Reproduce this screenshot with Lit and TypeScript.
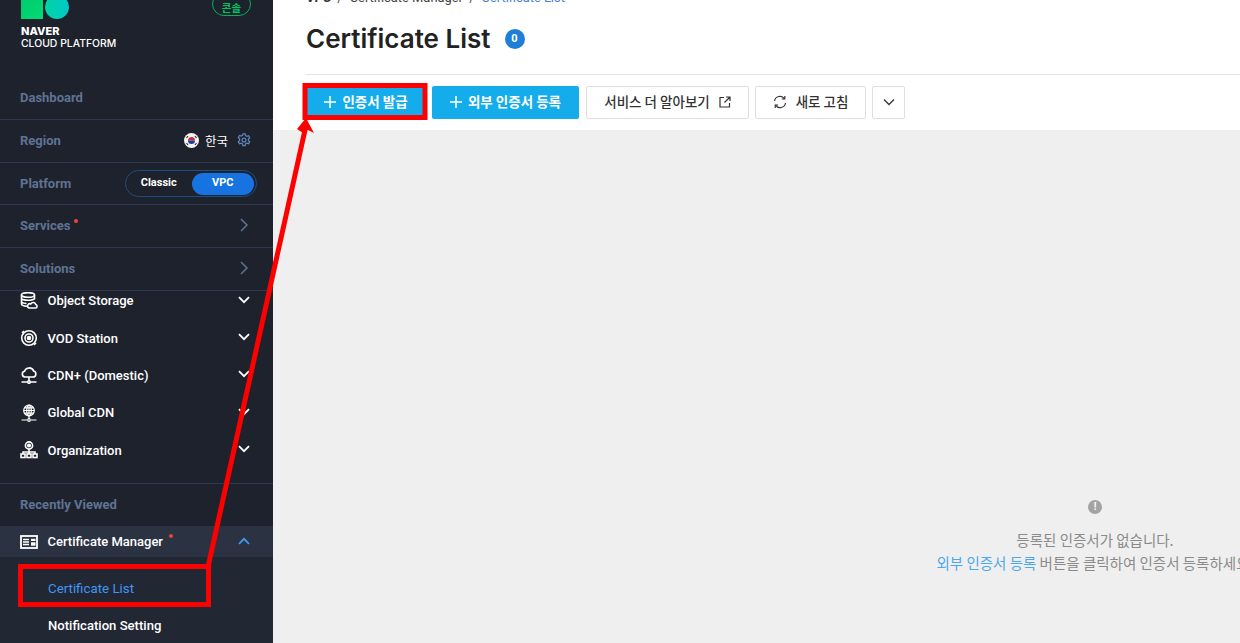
import { LitElement, html, css, svg } from "lit";
import { customElement } from "lit/decorators.js";

const chevDown = html`<svg class="chev" viewBox="0 0 12 8" width="12" height="8"><path d="M1 1.200 6 6.200 11 1.200" fill="none" stroke="#fff" stroke-width="1.800"/></svg>`;
const chevRight = html`<svg viewBox="0 0 8 14" width="8" height="14"><path d="M1 1 7 7 1 13" fill="none" stroke="#5f7394" stroke-width="1.500"/></svg>`;
const plus = html`<svg viewBox="0 0 12 12" width="12" height="12"><path d="M6 0v12M0 6h12" stroke="#fff" stroke-width="1.500"/></svg>`;
const ic = (c: unknown) => html`<svg class="ic" viewBox="0 0 18 18" width="18" height="18" fill="none" stroke="#fff" stroke-width="1.600">${c}</svg>`;

const icons = {
  storage: ic(svg`<ellipse cx="8" cy="3" rx="6.500" ry="2.300"/><path d="M1.500 3v9c0 1 2 2 5.500 2.200M14.500 3v4.500M1.500 6.500c1 1.500 4 1.800 6.500 1.800s5.500-.5 6.500-1.800M1.500 10c1 1 3 1.500 5 1.500"/><path d="M9 16h6.500a1.800 1.800 0 0 0 .3-3.500 2.700 2.700 0 0 0-5-.6A2 2 0 0 0 9 16z"/>`),
  vod: ic(svg`<circle cx="9" cy="9" r="7.300"/><circle cx="9" cy="9" r="4"/><circle cx="9" cy="9" r="1.500" fill="#fff"/><path d="M4 2 2 4M14 16l2-2"/>`),
  cdn: ic(svg`<path d="M5 11h8a3 3 0 0 0 .6-5.900A4.800 4.800 0 0 0 4.500 5.300 2.900 2.900 0 0 0 5 11z"/><path d="M9 11v4M1.500 16h5.500M11 16h5.500"/><circle cx="9" cy="16" r="1.300"/>`),
  global: ic(svg`<g stroke-width="1.200"><circle cx="9" cy="6.500" r="5.300"/><ellipse cx="9" cy="6.500" rx="2.300" ry="5.300"/><path d="M3.700 6.500h10.600M4.500 3.800h9M4.500 9.200h9M9 1.200v13.300M1.500 16h5.500M11 16h5.500"/><circle cx="9" cy="16" r="1.300"/></g>`),
  org: ic(svg`<circle cx="9" cy="4.500" r="3.600"/><circle cx="9" cy="4.500" r="1.300" fill="#fff"/><path d="M9 8v3M3 13v-2h12v2M9 11v2"/><rect x="1" y="13" width="4" height="3.500"/><rect x="7" y="13" width="4" height="3.500"/><rect x="13" y="13" width="4" height="3.500"/>`),
  cert: ic(svg`<rect x="1" y="3" width="16" height="12" stroke-width="1.800"/><path d="M3 6.500h6M3 9h6M3 11.500h6" stroke-width="1.400"/><rect x="11" y="5.800" width="4.500" height="2.200" fill="#fff" stroke="none"/><rect x="11" y="9.300" width="4.500" height="3.400" fill="#fff" stroke="none"/>`),
};

@customElement("app-root")
export class AppRoot extends LitElement {
  static styles = css`
    :host { display: block; width: 1240px; height: 643px; overflow: hidden; position: relative; font-family: Roboto, "Noto Sans CJK KR", sans-serif; background: #fff; }
    .page { display: flex; height: 643px; }
    .side { width: 273px; flex: none; background: #1e222d; display: flex; flex-direction: column; overflow: hidden; }
    .logo { height: 76px; flex: none; padding-left: 21px; position: relative; box-sizing: border-box; }
    .marks { display: flex; gap: 2px; margin-top: -5px; height: 24px; }
    .sq { width: 22px; height: 24px; background: linear-gradient(135deg, #00c96b, #00dc74); }
    .ci { width: 24px; height: 24px; border-radius: 50%; background: linear-gradient(90deg, #00d4a0, #00c8c8); }
    .brand { margin-top: 7px; color: #fff; font: 500 10.400px/11.500px Inter, sans-serif; }
    .brand b { display: block; font-weight: 800; font-size: 11px; }
    .console { position: absolute; left: 212px; top: -8px; width: 39px; height: 24px; box-sizing: border-box; border: 1px solid #00b45a; border-radius: 12px; color: #00c364; font: 700 10.500px/22px "Noto Sans CJK KR", sans-serif; text-align: center; padding-top: 4px; }
    .row { flex: none; box-sizing: border-box; border-bottom: 1px solid #2d3a52; display: flex; align-items: center; justify-content: space-between; padding: 0 25px 0 20px; color: #5f7394; font-size: 13px; font-weight: 700; }
    .h44 { height: 44px; }
    .h43 { height: 43px; }
    .h42 { height: 42px; }
    .lift { padding-bottom: 2px; }
    .label { position: relative; }
    .dot { position: absolute; width: 4px; height: 4px; border-radius: 50%; background: #f04438; right: -8px; top: 1px; }
    .region { display: flex; align-items: center; gap: 6px; color: #fff; font-weight: 400; font-size: 12.500px; margin-right: -3px; }
    .gear { margin-left: 3px; }
    .toggle { width: 132px; height: 27px; box-sizing: border-box; border: 1px solid #1d4d86; border-radius: 14px; display: flex; align-items: center; margin-right: -9px; padding: 1px 2px; color: #fff; font-size: 11px; font-weight: 700; }
    .toggle span { text-align: center; }
    .toggle .c { width: 62px; margin-right: 2px; margin-bottom: 2px; }
    .toggle .v { width: 63px; height: 22px; line-height: 20px; background: #1673e0; border-radius: 11px; }
    .menu { height: 193px; flex: none; border-bottom: 1px solid #2d3a52; box-sizing: border-box; overflow: hidden; }
    .item { display: flex; align-items: center; height: 37.400px; padding: 0 23px 0 20px; color: #fff; font-size: 13px; font-weight: 500; }
    .item .name { flex: 1; margin-left: 9.500px; position: relative; }
    .ic { flex: none; }
    .chev { margin-top: -2px; }
    .first { margin-top: -9px; }
    .rv { height: 42px; display: flex; align-items: center; padding: 0 20px 2px; box-sizing: border-box; color: #5f7394; font-size: 13px; font-weight: 700; flex: none; }
    .active { height: 31px; background: #2b3242; flex: none; }
    .active .name span { position: relative; }
    .active .dot { right: -10px; top: 0; width: 4px; height: 4px; }
    .sub { flex: 1; background: #222734; padding-top: 13px; }
    .sub div { height: 37px; display: flex; align-items: center; padding-left: 48px; color: #fff; font-size: 13.100px; font-weight: 500; }
    .sub .cur { color: #3f98f5; font-weight: 400; font-size: 13.300px; }
    .main { flex: 1; min-width: 0; display: flex; flex-direction: column; }
    .crumb { height: 6px; padding-left: 33px; color: #444; font-size: 12.900px; white-space: nowrap; overflow: hidden; }
    .crumb > div { margin-top: -10px; line-height: 15px; }
    .crumb b { font-weight: 700; color: #333; }
    .crumb a { color: #4a80d0; }
    .sep { margin: 0 7px 0 3px; }
    .title { height: 69px; margin-left: 33px; box-sizing: border-box; border-bottom: 1px solid #e4e4e4; display: flex; align-items: flex-start; padding-top: 17px; gap: 14px; }
    h1 { margin: 0; font: 600 26px/32px Inter, sans-serif; color: #222; }
    .badge { width: 20px; height: 20px; margin-top: 6px; border-radius: 50%; background: #1f7fd8; color: #fff; font: 700 11px/20px Roboto, sans-serif; text-align: center; }
    .bar { height: 55px; flex: none; box-sizing: border-box; padding: 11px 0 0 33px; display: flex; gap: 6px; align-items: flex-start; }
    .btn { height: 33px; box-sizing: border-box; border-radius: 2px; display: flex; align-items: center; justify-content: center; padding-bottom: 3px; font: 700 13.500px "Noto Sans CJK KR", sans-serif; white-space: nowrap; }
    .btn svg { margin-top: 2px; }
    .blue { background: #15aceb; color: #fff; gap: 6px; }
    .ghost { border: 1px solid #dfdfdf; color: #333; background: #fff; font-weight: 500; gap: 9px; }
    .w1 { width: 120px; }
    .w2 { width: 147px; margin-right: 1px; }
    .w3 { width: 163px; }
    .w4 { width: 111px; }
    .w5 { width: 33px; }
    .body { flex: 1; background: #efefef; position: relative; }
    .empty { position: absolute; top: 370px; left: 502px; width: 640px; display: flex; flex-direction: column; align-items: center; color: #8a8a8a; font: 400 14.500px/23px "Noto Sans CJK KR", sans-serif; white-space: nowrap; }
    .warn { width: 14px; height: 14px; border-radius: 50%; background: #a3a3a3; color: #fff; font: 700 10px/14px Roboto, sans-serif; text-align: center; margin-bottom: 14px; }
    .empty a { color: #4aa8ec; }
    .annot { position: absolute; left: 0; top: 0; pointer-events: none; }
  `;

  render() {
    return html`<div class="page">
      <aside class="side">
        <div class="logo">
          <div class="marks"><div class="sq"></div><div class="ci"></div></div>
          <div class="brand"><b>NAVER</b>CLOUD PLATFORM</div>
          <div class="console">콘솔</div>
        </div>
        <div class="row h44"><span>Dashboard</span></div>
        <div class="row h43 lift"><span>Region</span>
          <span class="region">
            <svg viewBox="0 0 15 15" width="15" height="15"><circle cx="7.500" cy="7.500" r="7.500" fill="#f4f4f4"/><path d="M4 7.500a3.500 3.500 0 0 1 7 0z" fill="#d8283c"/><path d="M4 7.500a3.500 3.500 0 0 0 7 0z" fill="#1c3f94"/><path d="M2.500 5 4 3M11 3l1.500 2M2.500 10 4 12M11 12l1.500-2" stroke="#333" stroke-width="1.200"/></svg>
            한국
            <svg class="gear" viewBox="0 0 16 16" width="14" height="14" fill="none" stroke="#5f86b8" stroke-width="1.400"><path d="M6.700 1h2.600l.4 2 1.600.9 1.900-.7 1.300 2.300-1.500 1.300v1.800l1.500 1.300-1.300 2.300-1.900-.7-1.600.9-.4 2H6.700l-.4-2-1.600-.9-1.900.7-1.300-2.300 1.500-1.300V6.500L1.500 5.200l1.300-2.300 1.900.7 1.600-.9z"/><circle cx="8" cy="8" r="2.200"/></svg>
          </span></div>
        <div class="row h42"><span>Platform</span>
          <div class="toggle"><span class="c">Classic</span><span class="v">VPC</span></div></div>
        <div class="row h43 lift"><span class="label">Services<i class="dot"></i></span>${chevRight}</div>
        <div class="row h43 lift"><span>Solutions</span>${chevRight}</div>
        <div class="menu">
          <div class="item first">${icons.storage}<span class="name">Object Storage</span>${chevDown}</div>
          <div class="item">${icons.vod}<span class="name">VOD Station</span>${chevDown}</div>
          <div class="item">${icons.cdn}<span class="name">CDN+ (Domestic)</span>${chevDown}</div>
          <div class="item">${icons.global}<span class="name">Global CDN</span>${chevDown}</div>
          <div class="item">${icons.org}<span class="name">Organization</span>${chevDown}</div>
        </div>
        <div class="rv">Recently Viewed</div>
        <div class="item active">${icons.cert}<span class="name"><span>Certificate Manager<i class="dot"></i></span></span>
          <svg class="chev" viewBox="0 0 12 8" width="12" height="8"><path d="M1 6.800 6 1.800 11 6.800" fill="none" stroke="#3f98f5" stroke-width="1.800"/></svg></div>
        <div class="sub"><div class="cur">Certificate List</div><div>Notification Setting</div></div>
      </aside>
      <main class="main">
        <div class="crumb"><div><b>VPC</b><span class="sep"> /</span>Certificate Manager<span class="sep"> /</span><a>Certificate List</a></div></div>
        <div class="title"><h1>Certificate List</h1><span class="badge">0</span></div>
        <div class="bar">
          <div class="btn blue w1">${plus}인증서 발급</div>
          <div class="btn blue w2">${plus}외부 인증서 등록</div>
          <div class="btn ghost w3">서비스 더 알아보기<svg viewBox="0 0 12 12" width="12" height="12" fill="none" stroke="#333" stroke-width="1.200"><path d="M5 1.500H1v9.500h9.500V7M7 1h4v4M11 1 5.500 6.500"/></svg></div>
          <div class="btn ghost w4"><svg viewBox="0 0 14 14" width="14" height="14" fill="none" stroke="#333" stroke-width="1.200"><path d="M1.500 6a5.500 5.500 0 0 1 10-2.200M12.500 8a5.500 5.500 0 0 1-10 2.200"/><path d="M11.800 1v3h-3M2.200 13v-3h3"/></svg>새로 고침</div>
          <div class="btn ghost w5"><svg viewBox="0 0 12 8" width="12" height="8"><path d="M1 1.500 6 6.500 11 1.500" fill="none" stroke="#333" stroke-width="1.300"/></svg></div>
        </div>
        <div class="body"><div class="empty"><div class="warn">!</div><div>등록된 인증서가 없습니다.</div><div><a>외부 인증서 등록</a> 버튼을 클릭하여 인증서 등록하세요.</div></div></div>
      </main>
    </div>
    <svg class="annot" width="1240" height="643" viewBox="0 0 1240 643" fill="none" stroke="#fe0000">
      <rect x="305" y="85.500" width="120" height="32" stroke-width="5"/>
      <rect x="20.500" y="566.500" width="188" height="38" stroke-width="5"/>
      <path d="M208 567 305 130" stroke-width="5"/>
      <path d="M297 129 306 118 314 133 308 130 303 133Z" fill="#fe0000" stroke="none"/>
    </svg>`;
  }
}
